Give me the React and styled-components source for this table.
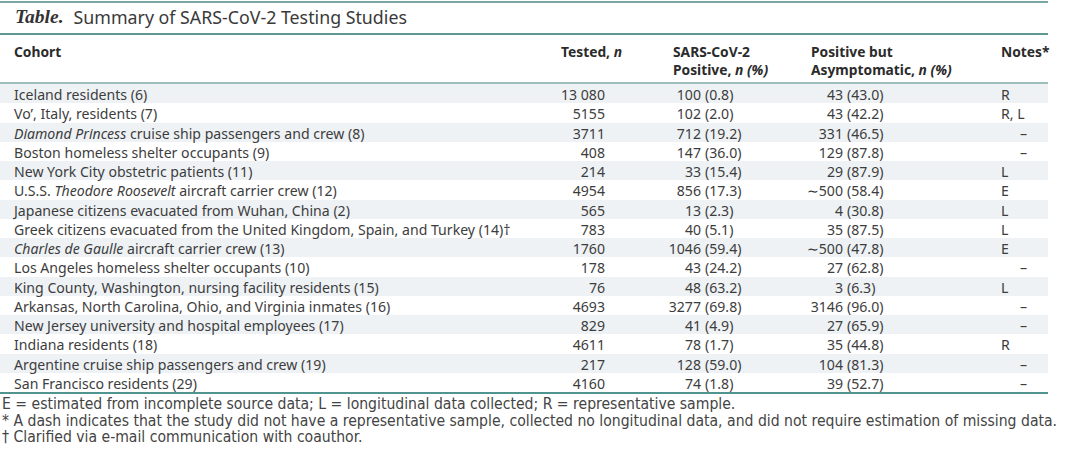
import React from 'react'
import styled, { createGlobalStyle } from 'styled-components'

const GlobalStyle = createGlobalStyle`
  html, body { margin: 0; padding: 0; background: #ffffff; }
  body { font-family: "Noto Sans", Lato, sans-serif; color: #3a3a3a; }
`

const rows = [
  { cohort: 'Iceland residents (6)', tested: '13 080', pos: ['100', '0.8'], asym: ['43', '43.0'], note: 'R' },
  { cohort: 'Vo\u2019, Italy, residents (7)', tested: '5155', pos: ['102', '2.0'], asym: ['43', '42.2'], note: 'R, L' },
  { italic: 'Diamond Princess', cohort: ' cruise ship passengers and crew (8)', tested: '3711', pos: ['712', '19.2'], asym: ['331', '46.5'], note: '–' },
  { cohort: 'Boston homeless shelter occupants (9)', tested: '408', pos: ['147', '36.0'], asym: ['129', '87.8'], note: '–' },
  { cohort: 'New York City obstetric patients (11)', tested: '214', pos: ['33', '15.4'], asym: ['29', '87.9'], note: 'L' },
  { pre: 'U.S.S. ', italic: 'Theodore Roosevelt', cohort: ' aircraft carrier crew (12)', tested: '4954', pos: ['856', '17.3'], asym: ['\u223C500', '58.4'], note: 'E' },
  { cohort: 'Japanese citizens evacuated from Wuhan, China (2)', tested: '565', pos: ['13', '2.3'], asym: ['4', '30.8'], note: 'L' },
  { cohort: 'Greek citizens evacuated from the United Kingdom, Spain, and Turkey (14)\u2020', tested: '783', pos: ['40', '5.1'], asym: ['35', '87.5'], note: 'L' },
  { italic: 'Charles de Gaulle', cohort: ' aircraft carrier crew (13)', tested: '1760', pos: ['1046', '59.4'], asym: ['\u223C500', '47.8'], note: 'E' },
  { cohort: 'Los Angeles homeless shelter occupants (10)', tested: '178', pos: ['43', '24.2'], asym: ['27', '62.8'], note: '–' },
  { cohort: 'King County, Washington, nursing facility residents (15)', tested: '76', pos: ['48', '63.2'], asym: ['3', '6.3'], note: 'L' },
  { cohort: 'Arkansas, North Carolina, Ohio, and Virginia inmates (16)', tested: '4693', pos: ['3277', '69.8'], asym: ['3146', '96.0'], note: '–' },
  { cohort: 'New Jersey university and hospital employees (17)', tested: '829', pos: ['41', '4.9'], asym: ['27', '65.9'], note: '–' },
  { cohort: 'Indiana residents (18)', tested: '4611', pos: ['78', '1.7'], asym: ['35', '44.8'], note: 'R' },
  { cohort: 'Argentine cruise ship passengers and crew (19)', tested: '217', pos: ['128', '59.0'], asym: ['104', '81.3'], note: '–' },
  { cohort: 'San Francisco residents (29)', tested: '4160', pos: ['74', '1.8'], asym: ['39', '52.7'], note: '–' },
]

const Page = styled.div`
  width: 1080px;
  height: 454px;
  padding-top: 1px;
  box-sizing: border-box;
`

const Rule = styled.div`
  width: 1048px;
  height: ${p => p.$h}px;
  background: ${p => p.$c};
`

const Title = styled.div`
  height: 30px;
  display: flex;
  align-items: center;
  padding-left: 15px;
  padding-bottom: 3px;
  box-sizing: border-box;
  font-size: 17.8px;
  color: #3a3a3a;
`

const TableWord = styled.span`
  font-family: "Liberation Serif", serif;
  font-weight: bold;
  font-style: italic;
  font-size: 19.5px;
  color: #333;
  margin-right: 10px;
`

const Grid = styled.div`
  width: 1048px;
  display: grid;
  grid-template-columns: 547px 112px 138px 190px 47px;
  padding-left: 14px;
  box-sizing: border-box;
  align-items: center;
`

const HeadRow = styled(Grid)`
  height: 47px;
  align-items: start;
  padding-top: 8px;
  font-weight: bold;
  font-size: 13.8px;
  line-height: 18px;
  color: #2b2b2b;
`

const Body = styled.div`
  font-size: 14.1px;
  color: #3d3d3d;
`

const Row = styled(Grid)`
  height: 19.25px;
  padding-top: 1px;
  background: ${p => (p.$striped ? '#eef2f5' : 'transparent')};
  white-space: nowrap;
`

const CohortCell = styled.div`
  white-space: nowrap;
`

const Cell = styled.div`
  display: flex;
  white-space: nowrap;
`

const Count = styled.span`
  display: inline-block;
  width: ${p => p.$w}px;
  margin-left: -20px;
  text-align: right;
`

const Pct = styled.span`
  padding-left: 4px;
`

const Note = styled.div`
  padding-left: ${p => (p.$dash ? 19 : 0)}px;
`

const Footer = styled.div`
  padding-top: 2px;
  padding-left: 2px;
  font-family: "DejaVu Sans Condensed", sans-serif;
  font-stretch: condensed;
  font-size: 15.6px;
  line-height: 16.5px;
  color: #444;
  white-space: nowrap;
`

function Head() {
  return (
    <HeadRow>
      <div>Cohort</div>
      <div>Tested, <i>n</i></div>
      <div>SARS-CoV-2<br />Positive, <i>n (%)</i></div>
      <div>Positive but<br />Asymptomatic, <i>n (%)</i></div>
      <div>Notes*</div>
    </HeadRow>
  )
}

export default function App() {
  return (
    <Page>
      <GlobalStyle />
      <Rule $h={2} $c="#79a5a3" />
      <Title>
        <TableWord>Table.</TableWord>
        Summary of SARS-CoV-2 Testing Studies
      </Title>
      <Rule $h={2} $c="#5f9794" />
      <Head />
      <Rule $h={2} $c="#9fbfbd" />
      <Body>
        {rows.map((r, i) => (
          <Row key={i} $striped={i % 2 === 0}>
            <CohortCell>
              {r.pre}
              {r.italic && <i>{r.italic}</i>}
              {r.cohort}
            </CohortCell>
            <Cell><Count $w={64}>{r.tested}</Count></Cell>
            <Cell><Count $w={48}>{r.pos[0]}</Count><Pct>({r.pos[1]})</Pct></Cell>
            <Cell><Count $w={52}>{r.asym[0]}</Count><Pct>({r.asym[1]})</Pct></Cell>
            <Note $dash={r.note === '–'}>{r.note}</Note>
          </Row>
        ))}
      </Body>
      <Rule $h={2} $c="#4f948f" />
      <Footer>
        <div>E = estimated from incomplete source data; L = longitudinal data collected; R = representative sample.</div>
        <div>* A dash indicates that the study did not have a representative sample, collected no longitudinal data, and did not require estimation of missing data.</div>
        <div>† Clarified via e-mail communication with coauthor.</div>
      </Footer>
    </Page>
  )
}
